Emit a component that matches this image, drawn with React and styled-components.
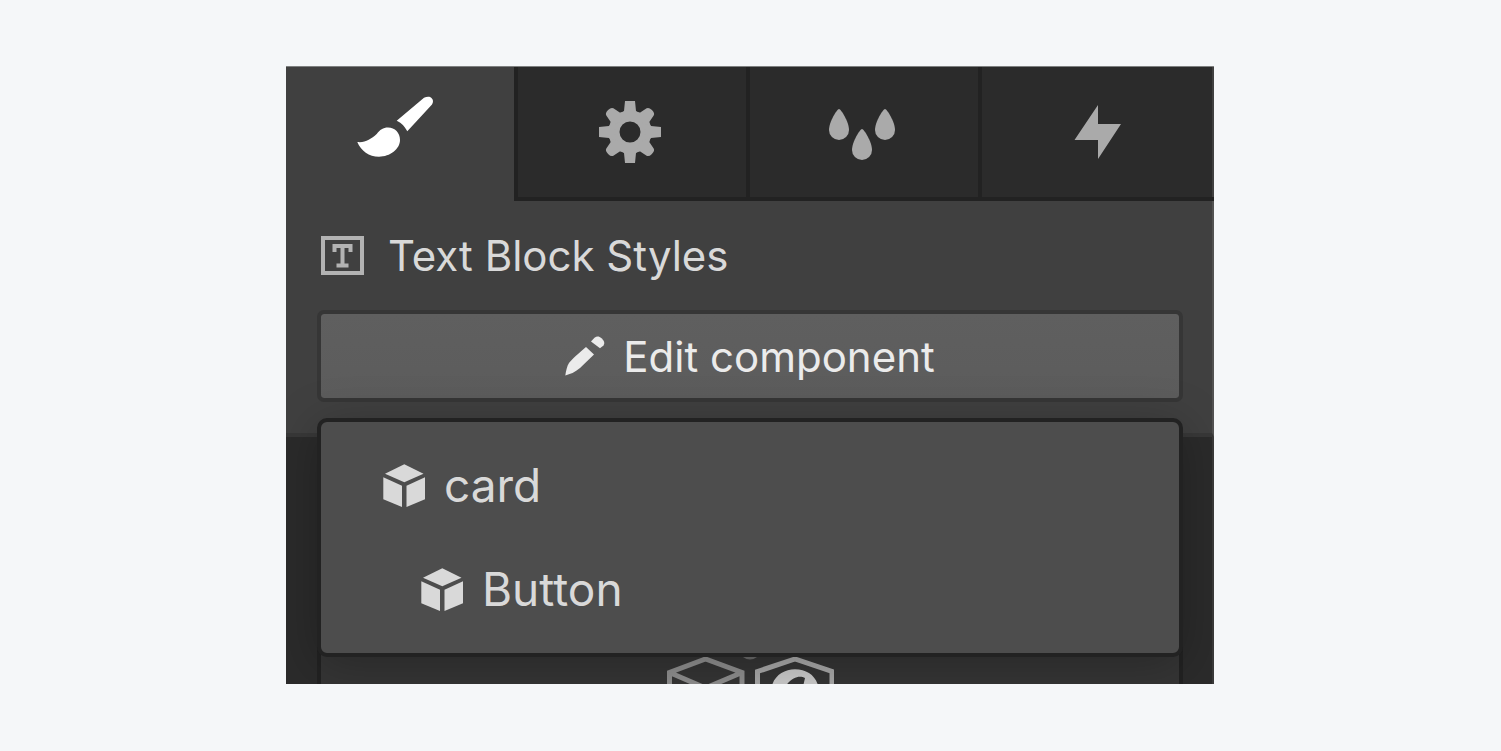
import React from "react";
import styled, { createGlobalStyle } from "styled-components";

const GlobalStyle = createGlobalStyle`
  *, *::before, *::after { box-sizing: border-box; }
  body {
    margin: 0;
    background: #f5f7f9;
    font-family: Inter, "Liberation Sans", sans-serif;
    font-optical-sizing: none;
  }
  button { font: inherit; color: inherit; cursor: pointer; }
  svg { display: block; flex: none; }
`;

const Page = styled.main`
  min-height: 100vh;
  padding: 66px 287px 66px 286px;
  @media (max-width: 1100px) {
    padding: 24px;
  }
`;

const Panel = styled.section`
  overflow: hidden;
  border-top: 1px solid #7e8080;
  background: #404040;
  color: #d9d9d9;
`;

const Tabs = styled.div`
  display: grid;
  grid-template-columns: 228fr 232fr 232fr 236fr;
  height: 134px;
`;

const Tab = styled.button`
  display: flex;
  align-items: center;
  justify-content: center;
  min-width: 0;
  padding: 0;
  border: 0;
  border-bottom: 4px solid ${(p) => (p.$active ? "#404040" : "#222222")};
  background: ${(p) => (p.$active ? "#404040" : "#2b2b2b")};
  color: ${(p) => (p.$active ? "#ffffff" : "#aaaaaa")};
  box-shadow: ${(p) => (p.$active ? "none" : "inset 4px 0 #222222")};
  &:last-child {
    box-shadow: inset 4px 0 #222222, inset -2px 0 #404040;
  }
`;

const StyleHeader = styled.div`
  padding: 31px 29px 31px 31px;
  border-right: 2px solid #525252;
  border-bottom: 4px solid #383838;
`;

const Title = styled.h1`
  display: flex;
  align-items: center;
  gap: 24px;
  height: 47px;
  margin: 0 0 31px;
  padding-left: 4px;
  font-size: 42px;
  font-weight: 380;
  line-height: 48px;
  white-space: nowrap;
`;

const MenuAnchor = styled.div`
  position: relative;
`;

const EditButton = styled.button`
  display: flex;
  align-items: center;
  justify-content: center;
  gap: 18px;
  width: 100%;
  height: 92px;
  padding: 0;
  border: 4px solid #363636;
  border-radius: 7px;
  background: linear-gradient(#5f5f5f, #5c5c5c);
  background-clip: padding-box;
  color: #ebebeb;
  font-size: 42px;
  font-weight: 380;
  white-space: nowrap;
`;

const Menu = styled.ul`
  position: absolute;
  z-index: 1;
  top: calc(100% + 16px);
  left: 0;
  right: 0;
  margin: 0;
  padding: 11px 0 12px;
  border: 4px solid #222222;
  border-radius: 10px;
  background: #4d4d4d;
  box-shadow: 0 8px 48px rgba(0, 0, 0, 0.25);
  list-style: none;
`;

const MenuItem = styled.button`
  display: flex;
  align-items: center;
  gap: 18px;
  width: 100%;
  height: 104px;
  padding: 0 0 0 ${(p) => (p.$level ? 100 : 62)}px;
  border: 0;
  background: transparent;
  font-size: 46px;
  font-weight: 380;
`;

const Body = styled.div`
  padding: 0 29px 0 31px;
  border-right: 2px solid #3a3a3a;
  background: #2b2b2b;
`;

const Preview = styled.div`
  display: flex;
  justify-content: center;
  align-items: flex-end;
  height: 247px;
  border: solid #222222;
  border-width: 0 4px;
  background: #353535;
`;

const BrushIcon = () => (
  <svg width="86" height="72" viewBox="0 0 86 72" fill="currentColor" aria-hidden="true">
    <path d="M.3 46C8 47 14 43 19.700 38C23 34 26 31.600 31 31.600C38 31.600 43 37 43 44C43 53 33 60.700 22 60.700C12 60.700 4 55 .3 46Z" />
    <path d="M39.700 24.700L67 1.800C70 .2 73 .3 74.500 2C76.500 4 76.400 6 75 8.500L50.300 35.300C48 31 45 27 39.700 24.700Z" />
  </svg>
);

const GearIcon = () => (
  <svg width="62" height="62" viewBox="-31 -31 62 62" fill="currentColor" aria-hidden="true">
    <circle r="16" fill="none" stroke="currentColor" strokeWidth="11" />
    {[0, 45, 90, 135, 180, 225, 270, 315].map((a) => (
      <path
        key={a}
        transform={`rotate(${a})`}
        d={
          a % 90
            ? "M-5-28.500Q-4.500-31 0-31Q4.500-31 5-28.500L6.500-21Q8-19 10-18L0-14L-10-18Q-8-19-6.500-21Z"
            : "M-5-31H5L6-21Q8-19 10-18L0-14L-10-18Q-8-19-6-21Z"
        }
      />
    ))}
  </svg>
);

const DROP = "M10 0C12 0 20 13 20 21a10 10 0 0 1-20 0C0 13 8 0 10 0Z";

const DropsIcon = () => (
  <svg width="66" height="56" viewBox="0 -5 66 56" fill="currentColor" aria-hidden="true">
    <path d={DROP} />
    <path d={DROP} transform="translate(23 20)" />
    <path d={DROP} transform="translate(46 0)" />
  </svg>
);

const BoltIcon = () => (
  <svg width="49" height="54" viewBox="-2 0 49 54" fill="currentColor" aria-hidden="true">
    <path d="M24 0V19H47L24 54V35H.5Z" />
  </svg>
);

const TextBlockIcon = () => (
  <svg width="43" height="39" viewBox="0 0 43 39" fill="none" stroke="#b3b3b3" strokeWidth="4" aria-hidden="true">
    <rect x="2" y="2" width="39" height="35" />
    <path d="M13.500 16V10H29.500V16M21.500 10V29.500M15.500 29.500H27.500" />
  </svg>
);

const PencilIcon = () => (
  <svg width="40" height="40" viewBox="0 0 40 40" fill="currentColor" aria-hidden="true">
    <path d="M.3 39.500C1 35 2 30 4 27C7 23 14 17 21 11L29 18.500L15 32C10 36.500 5 38 .3 39.500Z" />
    <path d="M26 5.500L29.500 1.800C32 0 34 .2 36.500 2.300C39.500 5 40 7.500 38.500 9.500L35 12.300Z" />
  </svg>
);

const CubeIcon = () => (
  <svg width="43" height="43" viewBox="0 0 43 43" fill="currentColor" aria-hidden="true">
    <path d="M21.300 .3L40.500 9.700L21.300 18.300L2 9.700Z" />
    <path d="M.3 13.300L19 21.700V43L.3 35.300Z" />
    <path d="M23.500 21.700L42 13.300V35.300L23.500 43Z" />
  </svg>
);

const PreviewIcon = () => (
  <svg width="168" height="27" viewBox="0 0 168 27" fill="none" strokeWidth="5" aria-hidden="true">
    <path d="M3.500 34V15.500L39.500 2L76 15.500V34M3.500 15.500L39.500 31L76 15.500" stroke="#8f8f8f" />
    <path d="M77 0H91Q84 5 77 0Z" fill="#6b6b6b" />
    <path d="M91.500 34V14.500L129 2L166 14.500V34" stroke="#a9a9a9" />
    <path d="M105 34C106 20 117 12.300 129 12.300C142 12.300 152 20 153 34H136L139 21C134 18 124 19 117 34Z" fill="#cccccc" />
  </svg>
);

const TABS = [
  { label: "Style", Icon: BrushIcon },
  { label: "Settings", Icon: GearIcon },
  { label: "Style manager", Icon: DropsIcon },
  { label: "Interactions", Icon: BoltIcon },
];

const COMPONENTS = [
  { name: "card", level: 0 },
  { name: "Button", level: 1 },
];

export default function App() {
  return (
    <Page>
      <GlobalStyle />
      <Panel>
        <Tabs role="tablist">
          {TABS.map(({ label, Icon }, i) => (
            <Tab key={label} role="tab" aria-label={label} aria-selected={i === 0} $active={i === 0}>
              <Icon />
            </Tab>
          ))}
        </Tabs>
        <StyleHeader>
          <Title>
            <TextBlockIcon />
            Text Block Styles
          </Title>
          <MenuAnchor>
            <EditButton>
              <PencilIcon />
              Edit component
            </EditButton>
            <Menu>
              {COMPONENTS.map(({ name, level }) => (
                <li key={name}>
                  <MenuItem $level={level}>
                    <CubeIcon />
                    {name}
                  </MenuItem>
                </li>
              ))}
            </Menu>
          </MenuAnchor>
        </StyleHeader>
        <Body>
          <Preview>
            <PreviewIcon />
          </Preview>
        </Body>
      </Panel>
    </Page>
  );
}
